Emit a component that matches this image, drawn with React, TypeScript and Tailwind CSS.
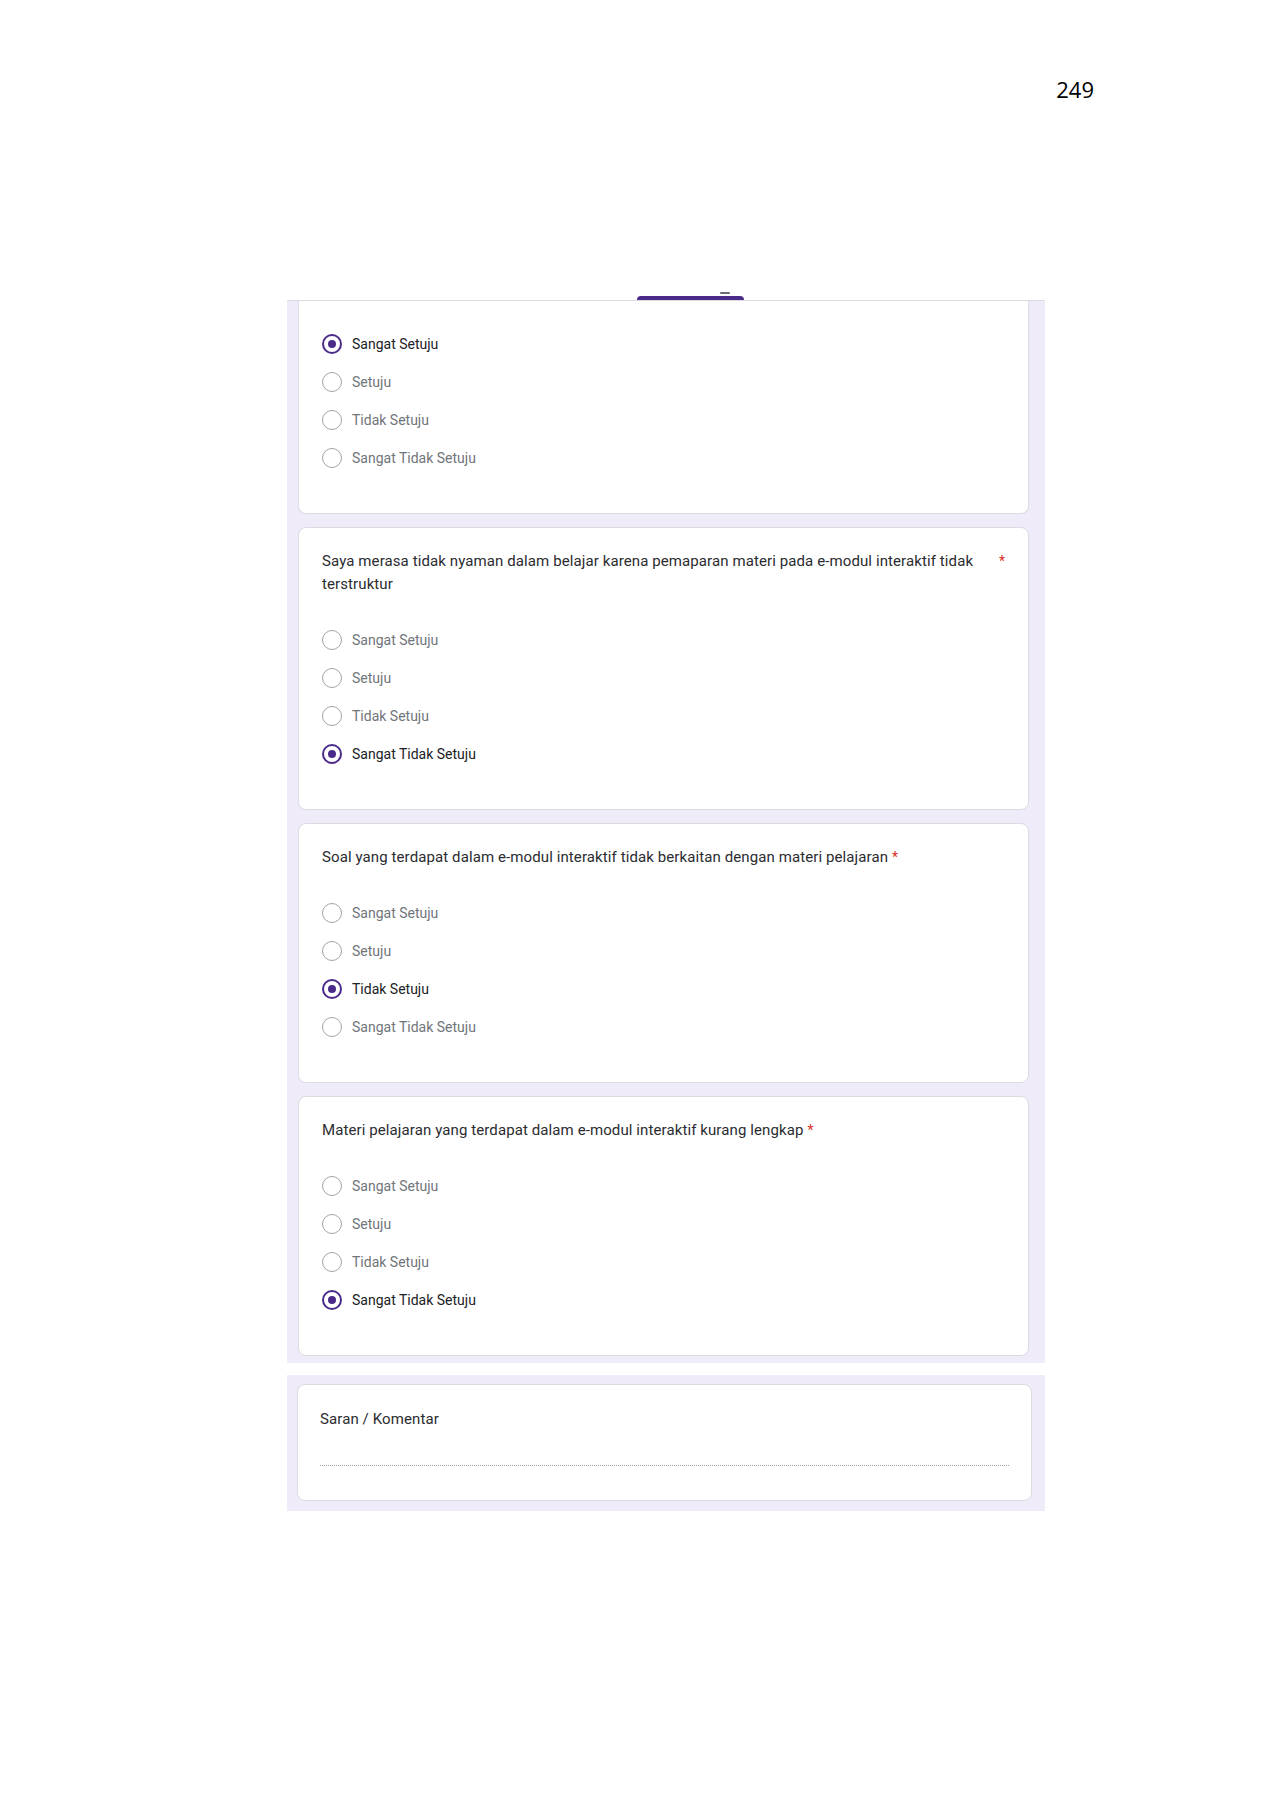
import React from "react";

const OPTIONS = ["Sangat Setuju", "Setuju", "Tidak Setuju", "Sangat Tidak Setuju"];

function Radio({ checked }: { checked: boolean }) {
  return checked ? (
    <span className="w-5 h-5 rounded-full border-2 border-[#4b2b8a] flex items-center justify-center shrink-0">
      <span className="w-[8px] h-[8px] rounded-full bg-[#4b2b8a]" />
    </span>
  ) : (
    <span className="w-5 h-5 rounded-full border-[1.5px] border-[#a3a3a8] shrink-0" />
  );
}

function Options({ selected }: { selected: number }) {
  return (
    <div className="flex flex-col">
      {OPTIONS.map((o, i) => (
        <div key={o} className="flex items-center h-[38px] gap-[10px]">
          <Radio checked={i === selected} />
          <span
            className={
              "text-[14px] leading-[18px] " +
              (i === selected ? "text-[#202124]" : "text-[#70757a]")
            }
          >
            {o}
          </span>
        </div>
      ))}
    </div>
  );
}

function Question({ title, selected }: { title: string; selected: number }) {
  return (
    <div className="ml-[11px] w-[731px] bg-white rounded-lg border border-[#dadce0] pt-[22px] pb-[36px] px-[23px]">
      <div className="flex items-start">
        <span className="min-w-0 text-[15px] leading-[23px] tracking-[0.1px] text-[#2b2c30]">{title}</span>
        <span className="shrink-0 ml-1 text-[14px] leading-[23px] text-[#d93025]">*</span>
      </div>
      <div className="mt-[25px]">
        <Options selected={selected} />
      </div>
    </div>
  );
}

export default function App() {
  return (
    <div
      className="w-[1272px] h-[1800px] bg-white relative"
      style={{ fontFamily: "Roboto, 'Noto Sans', Arial, sans-serif" }}
    >
      <div className="h-[300px] flex justify-end pr-[178px] pt-[75px]">
        <span
          className="text-[22px] leading-[28px] text-black"
          style={{ fontFamily: "'Open Sans', 'Liberation Sans', sans-serif" }}
        >
          249
        </span>
      </div>

      <div className="relative ml-[287px] w-[758px] bg-[#efebf8] border-t border-[#dadce0] pb-[7px] flex flex-col gap-[13px]">
        <div className="absolute left-[350px] -top-[5px] w-[107px] h-[4px] bg-[#4b2b8a] rounded-t-sm" />
        <div className="absolute left-[433px] -top-[9px] w-[10px] h-[2px] bg-[#6b6b75] rounded-full" />

        <div className="ml-[11px] w-[731px] bg-white rounded-b-lg border border-t-0 border-[#dadce0] pt-[24px] pb-[36px] px-[23px]">
          <Options selected={0} />
        </div>

        <Question
          title="Saya merasa tidak nyaman dalam belajar karena pemaparan materi pada e-modul interaktif tidak terstruktur"
          selected={3}
        />
        <Question
          title="Soal yang terdapat dalam e-modul interaktif tidak berkaitan dengan materi pelajaran"
          selected={2}
        />
        <Question
          title="Materi pelajaran yang terdapat dalam e-modul interaktif kurang lengkap"
          selected={3}
        />
      </div>

      <div className="mt-[12px] ml-[287px] w-[758px] bg-[#efebf8] pt-[9px] pb-[10px]">
        <div className="ml-[10px] w-[735px] bg-white rounded-lg border border-[#dadce0] pt-[23px] pb-[34px] px-[22px]">
          <div className="text-[15px] leading-[23px] tracking-[0.1px] text-[#2b2c30]">Saran / Komentar</div>
          <div className="mt-[34px] border-t border-dotted border-[#9aa0a6]" />
        </div>
      </div>
    </div>
  );
}
